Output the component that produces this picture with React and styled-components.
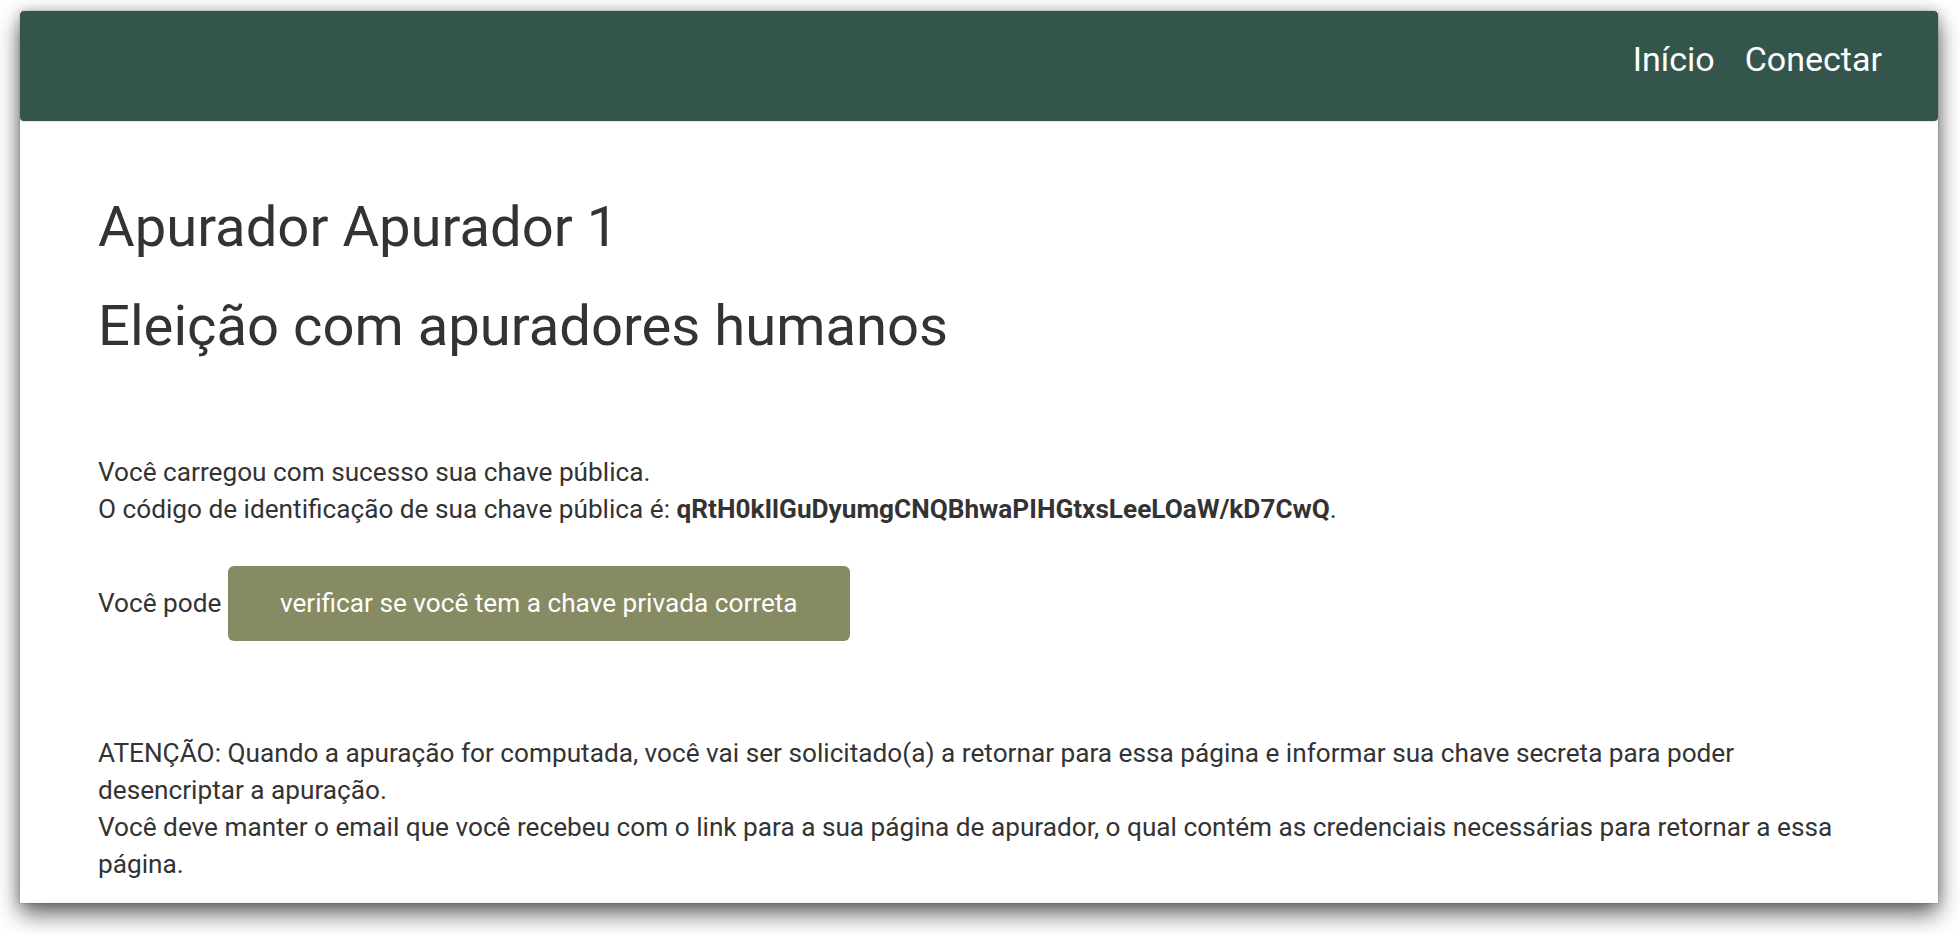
import styled, { createGlobalStyle } from 'styled-components';

const Global = createGlobalStyle`
html, body {
  margin: 0;
  padding: 0;
  background: #ffffff;
  overflow: hidden;
}
body {
  font-family: Roboto, 'Liberation Sans', sans-serif;
  color: #333333;
}
`

const Desk = styled.div`
width: 1960px;
height: 934px;
padding: 11px 0 0 20px;
box-sizing: border-box;
`

const Janela = styled.div`
width: 1918px;
height: 892px;
overflow: hidden;
background: #ffffff;
box-shadow: 0 0 0 1px rgba(0, 0, 0, 0.06), 0 11px 22px rgba(0, 0, 0, 0.6), 0 0 12px rgba(0, 0, 0, 0.2);
display: flex;
flex-direction: column;
`

const Barra = styled.nav`
flex-shrink: 0;
height: 110px;
box-sizing: border-box;
background-color: #33554c;
border-radius: 4px;
box-shadow: 0 1px 0 #e6e8e7;
display: flex;
justify-content: flex-end;
align-items: flex-start;
gap: 30px;
padding: 28px 56px 0 0;
`

const LinkNav = styled.a`
color: #ffffff;
font-size: 34px;
line-height: normal;
text-decoration: none;
cursor: pointer;
`

const Conteudo = styled.main`
padding: 76px 78px 0 78px;
`

const Titulo = styled.h2`
margin: ${p => p.$top || 0}px 0 0 0;
font-size: 56.2px;
font-weight: 400;
line-height: 1.1;
color: #333333;
`

const Paragrafo = styled.p`
margin: ${p => p.$top || 0}px 0 0 0;
font-size: 26.2px;
line-height: 37px;
`

const Chave = styled.b`
font-weight: 700;
`

const Botao = styled.button`
display: inline-block;
font-family: Roboto, 'Liberation Sans', sans-serif;
font-size: 26.2px;
line-height: 37px;
color: #ffffff;
background-color: #878b63;
border: none;
border-radius: 6px;
padding: 19px 52px;
cursor: pointer;
`

export default function App() {
  return (
    <>
      <Global />
      <Desk>
        <Janela>
          <Barra>
            <LinkNav>Início</LinkNav>
            <LinkNav>Conectar</LinkNav>
          </Barra>
          <Conteudo>
            <Titulo>Apurador Apurador 1</Titulo>
            <Titulo $top={37}>Eleição com apuradores humanos</Titulo>
            <Paragrafo $top={96}>
              Você carregou com sucesso sua chave pública.<br />
              O código de identificação de sua chave pública é: <Chave>qRtH0kIlGuDyumgCNQBhwaPIHGtxsLeeLOaW/kD7CwQ</Chave>.
            </Paragrafo>
            <Paragrafo $top={38}>
              Você pode <Botao>verificar se você tem a chave privada correta</Botao>
            </Paragrafo>
            <Paragrafo $top={94}>
              ATENÇÃO: Quando a apuração for computada, você vai ser solicitado(a) a retornar para essa página e informar sua chave secreta para poder<br />
              desencriptar a apuração.<br />
              Você deve manter o email que você recebeu com o link para a sua página de apurador, o qual contém as credenciais necessárias para retornar a essa<br />
              página.
            </Paragrafo>
          </Conteudo>
        </Janela>
      </Desk>
    </>
  );
}
